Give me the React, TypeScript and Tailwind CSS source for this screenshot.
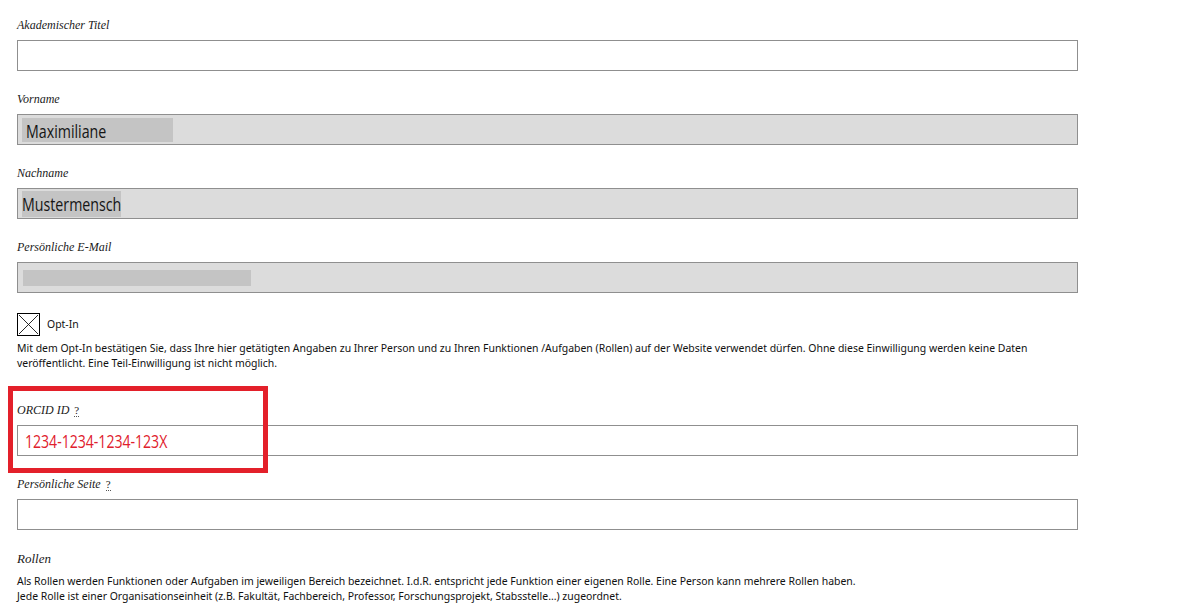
import React from 'react';

const labelCls = "block h-4 text-[12px] leading-4 italic text-[#1a1a1a] [font-family:'Liberation_Serif',serif]";
const bodyCls = "text-[10.45px] leading-[15px] text-[#111] [font-family:'Noto_Sans',sans-serif]";
const inputCls = "flex h-[31px] w-[1061px] items-center border border-[#8f8f8f]";

function Help() {
  return (
    <span className="ml-[5px] inline-block not-italic border-b border-dotted border-[#555] leading-[12px] text-[11px] [font-family:'Liberation_Serif',serif]">
      ?
    </span>
  );
}

function Field({ label, help, children, disabled, first }: { label: string; help?: boolean; children?: React.ReactNode; disabled?: boolean; first?: boolean }) {
  return (
    <div className={first ? '' : 'mt-[20px]'}>
      <label className={labelCls}>
        {label}
        {help && <Help />}
      </label>
      <div className={`${inputCls} mt-[7px] ${disabled ? 'bg-[#dcdcdc]' : 'bg-white'}`}>{children}</div>
    </div>
  );
}

export default function App() {
  return (
    <div className="relative min-h-[614px] w-[1199px] bg-white pl-[17px] pt-[17px]">
      <Field label="Akademischer Titel" first />

      <Field label="Vorname" disabled>
        <div className="ml-[4px] flex h-[24px] w-[151px] items-end bg-[#c4c4c4] pl-[4px]">
          <span className="inline-block origin-left scale-x-[0.79] text-[18px] leading-[21px] text-[#151515] [font-family:'Open_Sans',sans-serif]">
            Maximiliane
          </span>
        </div>
      </Field>

      <Field label="Nachname" disabled>
        <div className="ml-[4px] flex h-[26px] w-[99px] items-center bg-[#c4c4c4]">
          <span className="inline-block origin-left scale-x-[0.79] whitespace-nowrap text-[18px] leading-[22px] text-[#151515] [font-family:'Open_Sans',sans-serif]">
            Mustermensch
          </span>
        </div>
      </Field>

      <Field label="Persönliche E-Mail" disabled>
        <div className="ml-[5px] h-4 w-[228px] bg-[#c4c4c4]" />
      </Field>

      <div className="mt-[20px] flex items-center">
        <div className="h-[23px] w-[23px] border border-black bg-white">
          <svg viewBox="0 0 21 21" className="h-[21px] w-[21px]">
            <path d="M1 1 L20 20 M20 1 L1 20" stroke="#111" strokeWidth="0.9" fill="none" />
          </svg>
        </div>
        <span className={`${bodyCls} ml-[7px]`}>Opt-In</span>
      </div>
      <p className={`${bodyCls} mt-[5px] w-[1040px]`}>
        Mit dem Opt-In bestätigen Sie, dass Ihre hier getätigten Angaben zu Ihrer Person und zu Ihren Funktionen /Aufgaben (Rollen) auf der Website verwendet dürfen. Ohne diese Einwilligung werden keine Daten veröffentlicht. Eine Teil-Einwilligung ist nicht möglich.
      </p>

      <div className="mt-[31px]">
        <label className={labelCls}>
          ORCID ID
          <Help />
        </label>
        <div className={`${inputCls} mt-[7px] bg-white`}>
          <span className="ml-[7px] inline-block origin-left scale-x-[0.74] whitespace-nowrap text-[19px] leading-[22px] text-[#e0202c] [font-family:'Open_Sans',sans-serif]">
            1234-1234-1234-123X
          </span>
        </div>
      </div>

      <Field label="Persönliche Seite" help />

      <div className="mt-[21px]">
        <label className="block h-4 text-[13px] leading-4 italic text-[#1a1a1a] [font-family:'Liberation_Serif',serif]">Rollen</label>
        <div className={`${bodyCls} mt-[7px]`}>
          <p>Als Rollen werden Funktionen oder Aufgaben im jeweiligen Bereich bezeichnet. I.d.R. entspricht jede Funktion einer eigenen Rolle. Eine Person kann mehrere Rollen haben.</p>
          <p>Jede Rolle ist einer Organisationseinheit (z.B. Fakultät, Fachbereich, Professor, Forschungsprojekt, Stabsstelle...) zugeordnet.</p>
        </div>
      </div>

      {/* red highlight annotation around the ORCID field */}
      <div className="pointer-events-none absolute left-[8px] top-[386px] h-[87px] w-[260px] border-[5px] border-[#e3202a]" />
    </div>
  );
}
